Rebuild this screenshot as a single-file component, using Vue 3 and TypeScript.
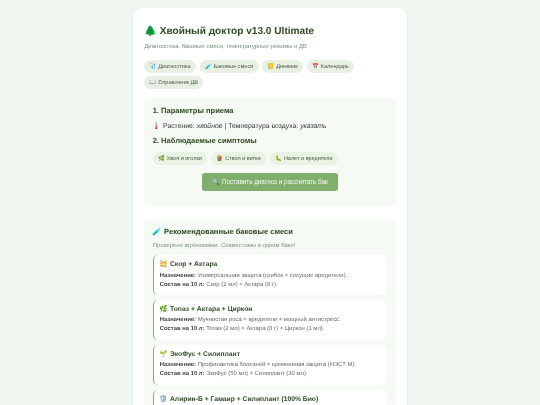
<script setup lang="ts">
interface Item { icon: string; label: string }
interface Mix { icon: string; name: string; purpose: string; recipe: string }
const tabs: Item[] = [
  { icon: '🩺', label: 'Диагностика' },
  { icon: '🧪', label: 'Баковые смеси' },
  { icon: '📒', label: 'Дневник' },
  { icon: '📅', label: 'Календарь' },
  { icon: '📖', label: 'Справочник ДВ' }
]
const symptoms: Item[] = [
  { icon: '🌿', label: 'Хвоя и иголки' },
  { icon: '🪵', label: 'Ствол и ветки' },
  { icon: '🐛', label: 'Налет и вредители' }
]
const mixes: Mix[] = [
  { icon: '💥', name: 'Скор + Актара', purpose: 'Универсальная защита (грибок + сосущие вредители).', recipe: 'Скор (2 мл) + Актара (8 г).' },
  { icon: '🌿', name: 'Топаз + Актара + Циркон', purpose: 'Мучнистая роса + вредители + мощный антистресс.', recipe: 'Топаз (2 мл) + Актара (8 г) + Циркон (1 мл).' },
  { icon: '🌱', name: 'ЭкоФус + Силиплант', purpose: 'Профилактика болезней + кремниевая защита (НЭСТ М).', recipe: 'ЭкоФус (50 мл) + Силиплант (30 мл).' },
  { icon: '🛡️', name: 'Алирин-Б + Гамаир + Силиплант (100% Био)', purpose: 'Биологическая защита от грибковых болезней.', recipe: 'Алирин-Б + Гамаир + Силиплант (30 мл).' }
]
</script>

<template>
  <div class="page">
    <main class="card">
      <h1 class="title nudge">🌲 Хвойный доктор v13.0 Ultimate</h1>
      <p class="subtitle nudge">Диагностика, баковые смеси, температурные режимы и ДВ</p>
      <nav class="tabs">
        <span v-for="t in tabs" :key="t.label" class="tab">{{ t.icon }} {{ t.label }}</span>
      </nav>

      <section class="panel form">
        <h2 class="h nudge">1. Параметры приема</h2>
        <p class="params nudge">🌡️ Растение: <i>хвойное</i> | Температура воздуха: <i>указать</i></p>
        <h2 class="h second nudge">2. Наблюдаемые симптомы</h2>
        <div class="chips">
          <span v-for="s in symptoms" :key="s.label" class="chip">{{ s.icon }} {{ s.label }}</span>
        </div>
        <button class="cta" type="button">🔍 Поставить диагноз и рассчитать бак</button>
      </section>

      <section class="panel mixes">
        <h2 class="h nudge">🧪 Рекомендованные баковые смеси</h2>
        <p class="note nudge">Проверено агрономами. Совместимы в одном баке!</p>
        <div class="mix-list">
          <article v-for="m in mixes" :key="m.name" class="mix">
            <h3 class="mix-name nudge">{{ m.icon }} {{ m.name }}</h3>
            <p class="line first nudge"><b>Назначение:</b> {{ m.purpose }}</p>
            <p class="line nudge"><b>Состав на 10 л:</b> {{ m.recipe }}</p>
          </article>
        </div>
      </section>
    </main>
  </div>
</template>

<style>
html, body { margin: 0; padding: 0; height: 405px; overflow: hidden; background: #f0f7f0; }
</style>

<style scoped>
.page {
  display: flex;
  justify-content: center;
  padding-top: 8.25px;
  font-family: "Liberation Sans", Arial, sans-serif;
  color: #333;
  text-rendering: geometricPrecision;
  filter: blur(0.25px);
}
.card {
  width: 273.75px;
  box-sizing: border-box;
  padding: 15px 11.25px;
  background: #fff;
  border-radius: 9px;
  box-shadow: 0 1px 4px rgba(60, 100, 60, 0.06);
}
.title { margin: 0; font-size: 10.1px; line-height: 16px; color: #2d4a22; font-weight: 700; }
.subtitle { margin: 2.75px 0 0; font-size: 5.9px; line-height: 8px; color: #76907a; }
.tabs { display: flex; flex-wrap: wrap; gap: 3px 3.75px; margin-top: 10px; }
.tab {
  height: 13px; line-height: 14.4px; padding: 0 5.25px; border-radius: 7px;
  background: #e8f0e4; color: #4a6245; font-size: 5.625px; white-space: nowrap;
}
.panel { background: #f6faf4; border-radius: 6px; padding: 7.5px 8.25px; margin-top: 9px; }
.form { padding-bottom: 14.7px; }
.h { margin: 0; font-size: 7.55px; line-height: 10px; color: #2d4a22; font-weight: 700; }
.params { margin: 5.5px 0 0; font-size: 6.85px; line-height: 10px; color: #333; }
.second { margin-top: 4.7px; }
.chips { display: flex; gap: 3.75px; margin-top: 6.3px; }
.chip {
  height: 12.7px; line-height: 14px; padding: 0 5.6px; border-radius: 6.5px;
  background: #e8f3e4; color: #4a6245; font-size: 5.5px; white-space: nowrap;
}
.cta {
  display: block; width: 136.6px; height: 17.7px; margin: 8.6px auto 0; padding: 0;
  background: #7fae6d; color: #f4f9f2; border: 0; border-radius: 3px;
  font: 6.3px "Liberation Sans", Arial, sans-serif;
}
.mixes { margin-top: 13.3px; padding-top: 7px; }
.note { margin: 5.7px 0 0; font-size: 5.9px; line-height: 8px; color: #76967a; }
.mix-list { display: flex; flex-direction: column; gap: 5px; margin-top: 5.3px; }
.mix {
  padding: 4.7px 6.1px 6.2px; background: #fff; border-left: 1.9px solid #7fae6d;
  border-radius: 5px;
}
.mix-name { margin: 0; font-size: 6.75px; line-height: 10px; color: #2d4a22; font-weight: 700; }
.line { margin: 0; font-size: 5.9px; line-height: 9px; color: #666; }
.first { margin-top: 1.1px; }
.line b { color: #444; }
/* The text sits a fraction lower in its line box; the layout height stays the same. */
.nudge { padding-top: 0.8px; margin-bottom: -0.8px; }
</style>
